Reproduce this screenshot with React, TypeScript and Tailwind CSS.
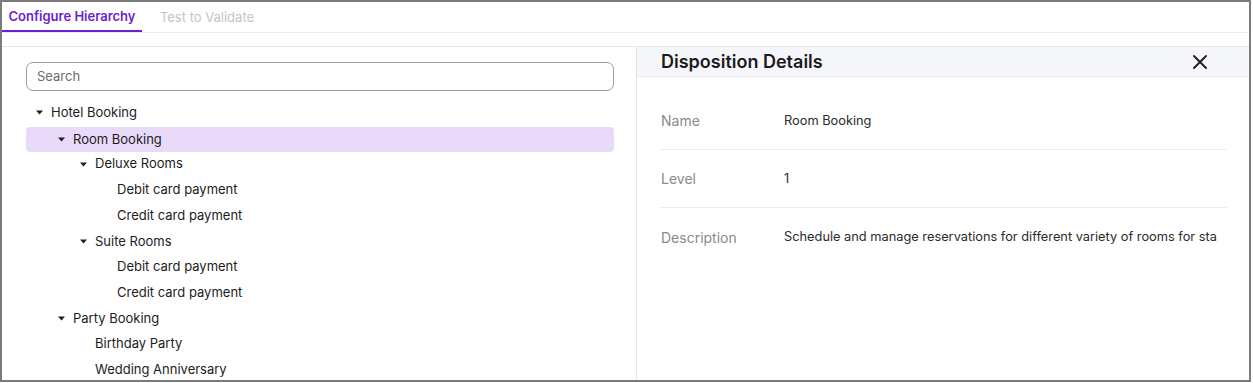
import React from 'react';

interface TreeNode {
  label: string;
  level: number;
  hasChildren?: boolean;
  selected?: boolean;
}

const tree: TreeNode[] = [
  { label: 'Hotel Booking', level: 0, hasChildren: true },
  { label: 'Room Booking', level: 1, hasChildren: true, selected: true },
  { label: 'Deluxe Rooms', level: 2, hasChildren: true },
  { label: 'Debit card payment', level: 3 },
  { label: 'Credit card payment', level: 3 },
  { label: 'Suite Rooms', level: 2, hasChildren: true },
  { label: 'Debit card payment', level: 3 },
  { label: 'Credit card payment', level: 3 },
  { label: 'Party Booking', level: 1, hasChildren: true },
  { label: 'Birthday Party', level: 2 },
  { label: 'Wedding Anniversary', level: 2 },
];

const details = [
  { label: 'Name', value: 'Room Booking' },
  { label: 'Level', value: '1' },
  {
    label: 'Description',
    value: 'Schedule and manage reservations for different variety of rooms for standard, deluxe and suite stays',
  },
];

const Caret = () => (
  <svg width="7" height="5" viewBox="0 0 7 5" className="shrink-0">
    <path d="M0 0.5 L7 0.5 L3.5 4.5 Z" fill="#1f1f1f" />
  </svg>
);

const indents = ['pl-[10px]', 'pl-[32px]', 'pl-[54px]', 'pl-[76px]'];

export default function App() {
  return (
    <div className="w-[1251px] h-[382px] border-2 border-[#7b7b7b] bg-white flex flex-col font-['Inter',sans-serif] overflow-hidden">
      {/* Tabs */}
      <div className="h-[31px] shrink-0 flex items-stretch border-b border-[#ececec]">
        <div className="w-[140px] pt-[2px] flex items-center justify-center border-b-2 border-[#6a1fd0] text-[13px] font-semibold text-[#6a1fd0]">
          Configure Hierarchy
        </div>
        <div className="w-[130px] pt-[2px] flex items-center justify-center text-[13px] text-[#c4c4c4]">
          Test to Validate
        </div>
      </div>
      <div className="h-[14px] shrink-0 border-b border-[#e6e6e6]" />

      <div className="flex flex-1 min-h-0">
        {/* Tree panel */}
        <div className="w-[634px] shrink-0 pt-[15px] pl-[24px] pr-[22px]">
          <div className="h-[29px] rounded-[7px] border border-[#9d9aab] flex items-center px-[10px] text-[13px] text-[#6b6b6b]">
            Search
          </div>
          <div className="mt-[9px]">
            {tree.map((node, i) => (
              <div
                key={i}
                className={`h-[25.7px] flex items-center rounded-[4px] text-[13px] text-[#1c1c1c] ${indents[node.level]} ${
                  node.selected ? 'bg-[#e9dafa] mt-[1px] mb-[-1px]' : ''
                }`}
              >
                {node.hasChildren ? (
                  <>
                    <Caret />
                    <span className="ml-[8px]">{node.label}</span>
                  </>
                ) : (
                  <span className="ml-[15px]">{node.label}</span>
                )}
              </div>
            ))}
          </div>
        </div>

        {/* Details panel */}
        <div className="flex-1 min-w-0 border-l border-[#e6e6e6] flex flex-col">
          <div className="h-[30px] shrink-0 bg-[#f6f7fb] border-b border-[#e8e8ee] flex items-center justify-between pl-[24px] pr-[42px]">
            <span className="text-[18px] font-semibold text-[#1b1b1b]">Disposition Details</span>
            <svg width="14" height="14" viewBox="0 0 14 14">
              <path d="M1 1 L13 13 M13 1 L1 13" stroke="#1b1b1b" strokeWidth="1.8" strokeLinecap="round" />
            </svg>
          </div>
          <div className="pt-[15px] pl-[23px] pr-[22px]">
            {details.map((d, i) => (
              <div
                key={d.label}
                className={`h-[58px] flex items-center ${i < details.length - 1 ? 'border-b border-[#ededed]' : ''}`}
              >
                <span className="w-[124px] shrink-0 pl-[1px] text-[14px] text-[#8a8a8a]">{d.label}</span>
                <span className="flex-1 min-w-0 overflow-hidden whitespace-nowrap mr-[10px] text-[12.8px] text-[#2b2b2b]">
                  {d.value}
                </span>
              </div>
            ))}
          </div>
        </div>
      </div>
    </div>
  );
}
